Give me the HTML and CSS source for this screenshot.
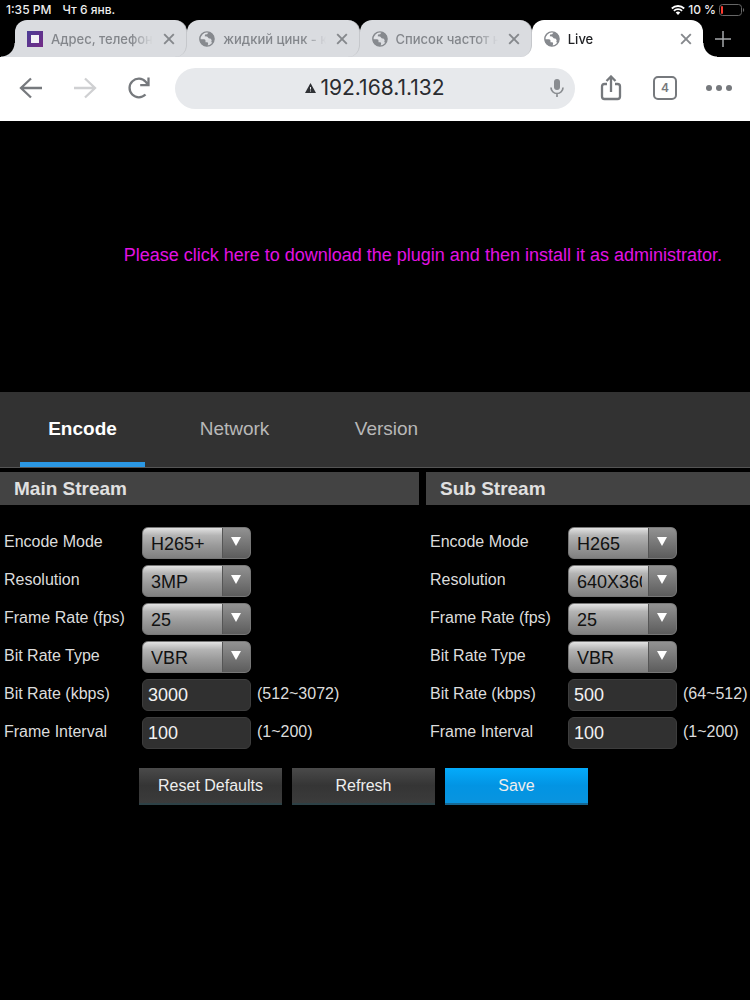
FILE: index.html
```html
<!DOCTYPE html>
<html lang="en">
<head>
<meta charset="utf-8">
<meta name="viewport" content="width=device-width, initial-scale=1">
<title>Live</title>
<link rel="stylesheet" href="styles.css">
</head>
<body>
<svg class="defs" aria-hidden="true">
  <symbol id="globe" viewBox="0 0 16 16">
    <circle cx="8" cy="8" r="7.1" fill="none" stroke="currentColor" stroke-width="1.3"/>
    <path fill="currentColor" d="M9.5.9C6.500 0 2.600 1.600 1.300 5.200L.8 8.200l4.200.1c1 .1 1.500.7 1.500 1.600v1.300l1.800.1c.7.2.9.7.8 1.400l-.5 2.400C5 15.600 1.800 13.500.8 10.300L.4 7.500C.4 3 4.600-.2 9.500.9zM9.600 1.200 8.200 3.200 6.100 3.500 5.800 5.200l2.300.2 1.500 1.900 2.300.4.8 1.700-.5 1.500 1.300 1.200c2.500-3 2.100-7.500-.8-9.600z"/>
    <path class="globe-land" d="M6.200 1.500 8.400 1.600 7.600 2.700 5.700 3.200 5 5.100 6.400 6.300 9.100 6.200 9.800 8.300 8 9.300 5.800 8 2 7.600 1.800 6.200 3.700 5.700 4 3.200z" opacity=".2"/>
  </symbol>
  <symbol id="cross" viewBox="0 0 12 12"><path d="M1.200 1.200l9.600 9.600M10.800 1.200l-9.600 9.600" fill="none" stroke="currentColor" stroke-width="1.900"/></symbol>
</svg>

<header class="browser">
  <div class="status">
    <span>1:35 PM</span><span class="date">Чт 6 янв.</span>
    <span class="power">
      <svg width="14" height="10" viewBox="0 0 14 10"><g fill="none" stroke="#fff" stroke-width="1.800"><path d="M.8 3.500a9 9 0 0 1 12.400 0M2.900 5.800a6 6 0 0 1 8.200 0"/></g><path fill="#fff" d="M4.700 7.500a3.400 3.400 0 0 1 4.600 0L7 9.900z"/></svg>
      <span>10 %</span>
      <svg width="26" height="12" viewBox="0 0 26 12"><rect x=".5" y=".5" width="22" height="11" rx="3" fill="none" stroke="#666"/><path d="M24 4v4c1.600-.5 1.600-3.500 0-4z" fill="#666"/><rect x="2" y="2" width="2" height="8" rx="1" fill="#ff3b30"/></svg>
    </span>
  </div>
  <nav class="tabstrip" aria-label="Browser tabs">
    <div class="tab"><svg class="fav" viewBox="0 0 16 16"><defs><linearGradient id="violet" x2="1" y2="1"><stop stop-color="#4a3d96"/><stop offset="1" stop-color="#742b86"/></linearGradient></defs><path fill="url(#violet)" fill-rule="evenodd" d="M0 0h16v16H0zM4 4v8h8V4z"/><path fill="#f2f2f6" d="M4 4h8v8H4z"/></svg><span class="title">Адрес, телефон</span><button class="close" aria-label="Close tab"><svg><use href="#cross"/></svg></button></div>
    <div class="tab"><svg class="fav"><use href="#globe"/></svg><span class="title">жидкий цинк - к</span><button class="close" aria-label="Close tab"><svg><use href="#cross"/></svg></button></div>
    <div class="tab"><svg class="fav"><use href="#globe"/></svg><span class="title">Список частот н</span><button class="close" aria-label="Close tab"><svg><use href="#cross"/></svg></button></div>
    <div class="tab active"><svg class="fav"><use href="#globe"/></svg><span class="title">Live</span><button class="close" aria-label="Close tab"><svg><use href="#cross"/></svg></button></div>
    <button class="newtab" aria-label="New tab"><svg width="16" height="16" viewBox="0 0 16 16"><path d="M8 0v16M0 8h16" stroke="#a5a8ab" stroke-width="1.500"/></svg></button>
  </nav>
  <div class="toolbar">
    <button class="tool" aria-label="Back"><svg width="24" height="22" viewBox="0 0 24 22"><path d="M23 11H2M12 1.500 2 11l10 9.500"/></svg></button>
    <button class="tool dim" aria-label="Forward"><svg width="24" height="22" viewBox="0 0 24 22"><path d="M1 11h21M12 1.500 22 11 12 20.500"/></svg></button>
    <button class="tool" aria-label="Reload"><svg width="24" height="24" viewBox="0 0 24 24"><path d="M18.500 18.500a9.300 9.300 0 1 1 .2-12.800l1.800 2.300M21.500 1.500v7.700h-8.300"/></svg></button>
    <button class="address">
      <svg width="11" height="10" viewBox="0 0 11 10"><path d="M5.500 0 11 10H0z" fill="#303236"/><path d="M5.500 4v2.500M5.500 7.500v1" stroke="#e8eaed"/></svg>
      <span>192.168.1.132</span>
      <svg class="mic" width="16" height="20" viewBox="0 0 16 20"><rect x="5" y="1" width="6" height="11" rx="3" fill="#898c90"/><path d="M2 9.500a6 6 0 0 0 12 0M8 15.500V19" fill="none" stroke="#898c90" stroke-width="1.700"/></svg>
    </button>
    <button class="tool" aria-label="Share"><svg width="22" height="26" viewBox="0 0 22 26"><path d="M7 9H4.500Q2 9 2 11.500v10Q2 24 4.500 24h13q2.500 0 2.500-2.500v-10Q20 9 17.500 9H15M11 17V2M6.500 6 11 1.500 15.500 6"/></svg></button>
    <button class="tool" aria-label="Open tabs"><span class="count">4</span></button>
    <button class="tool" aria-label="More"><svg width="26" height="6" viewBox="0 0 26 6"><g class="dots"><circle cx="3" cy="3" r="3"/><circle cx="13" cy="3" r="3"/><circle cx="23" cy="3" r="3"/></g></svg></button>
  </div>
</header>

<main>
  <div class="video"><a href="#plugin">Please click here to download the plugin and then install it as administrator.</a></div>
  <nav class="sections">
    <a class="current" href="#encode">Encode</a><a href="#network">Network</a><a href="#version">Version</a>
  </nav>
  <form>
    <div class="streams">
      <section>
        <h2>Main Stream</h2>
        <div class="fields">
          <label for="m1">Encode Mode</label><span class="pick"><select id="m1"><option>H265+</option></select></span><span></span>
          <label for="m2">Resolution</label><span class="pick"><select id="m2"><option>3MP</option></select></span><span></span>
          <label for="m3">Frame Rate (fps)</label><span class="pick"><select id="m3"><option>25</option></select></span><span></span>
          <label for="m4">Bit Rate Type</label><span class="pick"><select id="m4"><option>VBR</option></select></span><span></span>
          <label for="m5">Bit Rate (kbps)</label><input id="m5" type="text" value="3000"><span class="range">(512~3072)</span>
          <label for="m6">Frame Interval</label><input id="m6" type="text" value="100"><span class="range">(1~200)</span>
        </div>
      </section>
      <section>
        <h2>Sub Stream</h2>
        <div class="fields">
          <label for="s1">Encode Mode</label><span class="pick"><select id="s1"><option>H265</option></select></span><span></span>
          <label for="s2">Resolution</label><span class="pick"><select id="s2"><option>640X360</option></select></span><span></span>
          <label for="s3">Frame Rate (fps)</label><span class="pick"><select id="s3"><option>25</option></select></span><span></span>
          <label for="s4">Bit Rate Type</label><span class="pick"><select id="s4"><option>VBR</option></select></span><span></span>
          <label for="s5">Bit Rate (kbps)</label><input id="s5" type="text" value="500"><span class="range">(64~512)</span>
          <label for="s6">Frame Interval</label><input id="s6" type="text" value="100"><span class="range">(1~200)</span>
        </div>
      </section>
    </div>
    <div class="actions">
      <button type="reset">Reset Defaults</button>
      <button type="button">Refresh</button>
      <button type="submit" class="save">Save</button>
    </div>
  </form>
</main>
</body>
</html>
```

FILE: styles.css
```css
* { box-sizing: border-box; }
body { margin: 0; background: #000; color: #dcdcdc; font: 16px/20px "Liberation Sans", Arial, sans-serif; }
button { border: 0; padding: 0; background: none; font: inherit; color: inherit; }
a { text-decoration: none; }
.defs { position: absolute; width: 0; height: 0; }
.globe-land { fill: #fff; }

/* Browser chrome */
.browser { font-family: Inter, sans-serif; }
.status { display: flex; align-items: center; height: 20px; padding: 0 5px 0 6px; font-size: 12px; font-weight: 500; color: #eee; }
.date { margin-left: 11px; }
.power { display: flex; align-items: center; gap: 3px; margin-left: auto; }
.tabstrip { position: relative; z-index: 0; display: flex; height: 37px; padding-left: 15px; }
.tab {
  --fill: #dadce0;
  position: relative;
  flex: 1;
  min-width: 0;
  display: flex;
  align-items: center;
  padding: 0 11px 0 12px;
  border-right: 1px solid #c6c8cc;
  border-radius: 12px 12px 12px 0;
  background: var(--fill);
  color: #83868b;
  font-size: 13px;
  font-weight: 500;
}
.tab::before, .active::after {
  content: "";
  position: absolute;
  z-index: -1;
  bottom: 0;
  width: 14px;
  height: 14px;
}
.tab::before { left: -14px; background: radial-gradient(circle at 0 0, transparent 13px, var(--fill) 14px); }
.active::after { right: -14px; background: radial-gradient(circle at 100% 0, transparent 13px, var(--fill) 14px); }
.active { --fill: #fff; border-right: 0; border-radius: 12px 12px 0 0; color: #202124; }
.fav { flex: none; width: 16px; height: 16px; margin-right: 8px; color: #86898e; }
.title { flex: 1; min-width: 0; overflow: hidden; white-space: nowrap; mask-image: linear-gradient(90deg, #000 78%, transparent); }
.close { flex: none; width: 12px; height: 12px; margin-left: 10px; color: #85888c; }
.close svg { display: block; width: 12px; height: 12px; }
.newtab { flex: none; display: grid; place-items: center; width: 47px; padding-right: 7px; }

.toolbar { display: flex; align-items: center; height: 64px; padding: 0 4px 2px; background: #fff; color: #76797d; }
.tool { flex: none; display: grid; place-items: center; width: 54px; height: 48px; }
.tool svg { fill: none; stroke: currentColor; stroke-width: 2.3; }
.dim { color: #cfd0d2; }
.tool .dots { fill: currentColor; stroke: none; }
.address {
  flex: 1;
  display: flex;
  align-items: center;
  justify-content: center;
  gap: 4px;
  position: relative;
  height: 41px;
  margin: 0 9px;
  border-radius: 21px;
  background: #e7e9ec;
  color: #2a2c30;
  font-size: 21px;
}
.mic { position: absolute; right: 10px; }
.count { display: grid; place-items: center; width: 24px; height: 24px; border: 2px solid; border-radius: 5px; font-size: 12px; font-weight: 600; }

/* Camera page */
.video { display: flex; align-items: center; justify-content: flex-end; height: 271px; padding: 0 28px 4px; font-size: 18px; }
.video a { color: #e312e3; }
.sections { display: flex; gap: 27px; height: 76px; padding-left: 20px; border-bottom: 1px solid #555; background: #323232; font-size: 19px; }
.sections a { width: 125px; padding-top: 27px; border-bottom: 5px solid transparent; text-align: center; color: #b8b8b8; }
.sections .current { border-color: #2b98e4; color: #fff; font-weight: bold; }
.streams { display: grid; grid-template-columns: 419fr 324fr; gap: 7px; padding-top: 4px; }
h2 { margin: 0; padding: 7px 14px 6px; background: #434343; color: #e0e0e0; font-size: 19px; line-height: 20px; }
.fields { display: grid; grid-template-columns: 132px 109px 1fr; gap: 6px; grid-auto-rows: 32px; align-items: center; padding: 22px 0 0 4px; white-space: nowrap; }
.fields label, .range { padding-bottom: 2px; }
.pick { position: relative; height: 32px; }
.pick::after { content: ""; position: absolute; right: 10px; top: 10px; width: 10px; height: 9px; background: #fff; clip-path: polygon(0 0, 100% 0, 50% 100%); pointer-events: none; }
select {
  appearance: none;
  width: 100%;
  height: 32px;
  padding: 2px 34px 0 8px;
  border: 1px solid #777;
  border-radius: 6px;
  background:
    linear-gradient(90deg, #555 1px, transparent 1px) right / 28px 100% no-repeat,
    linear-gradient(#929292, #777 50%, #5c5c5c) right / 28px 100% no-repeat,
    linear-gradient(#e2e2e2, #b4b4b4 25%, #999 60%, #808080);
  color: #111;
  font: 18px "Liberation Sans", Arial, sans-serif;
}
input { width: 100%; height: 32px; padding: 0 5px; border: 1px solid #3d3d3d; border-radius: 6px; background: #303030; color: #f2f2f2; font: 18px "Liberation Sans", Arial, sans-serif; }
.actions { display: flex; gap: 10px; padding: 19px 0 20px 139px; }
.actions button { width: 143px; height: 37px; border-bottom: 2px solid #2d4146; background: linear-gradient(#4a4a4a, #353535 50%, #3b3b3b); color: #eee; font-size: 16px; }
.actions .save { border-bottom-color: #176792; background: linear-gradient(#04abfb, #0294e3 50%, #0994df); }
```
